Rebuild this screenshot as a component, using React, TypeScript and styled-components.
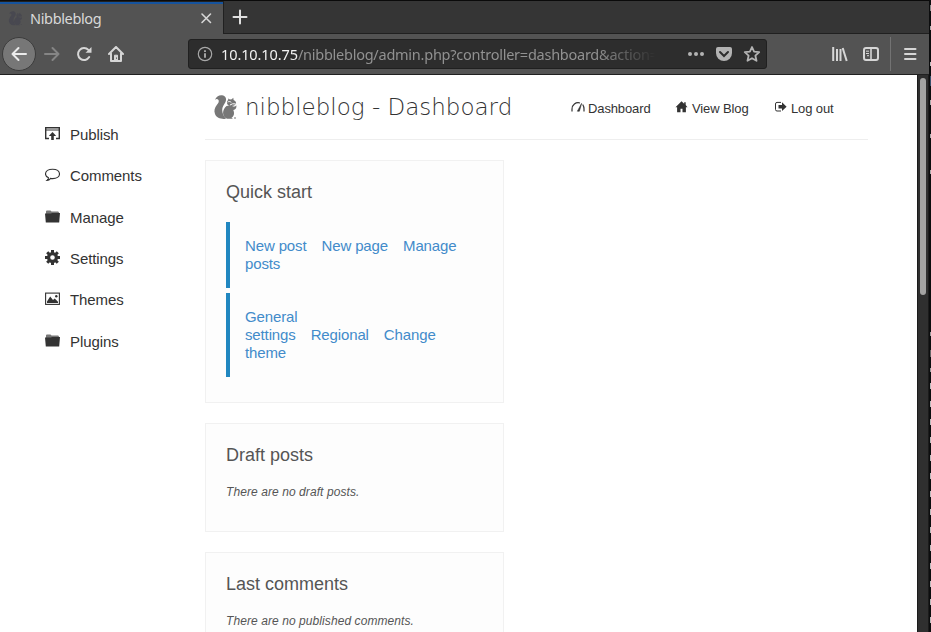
import React from "react";
import styled, { createGlobalStyle } from "styled-components";

const Global = createGlobalStyle`
  * { box-sizing: border-box; }
  body { margin: 0; background: #0c0d0e; overflow: hidden; }
  h1, h2, p { margin: 0; font-weight: 400; }
  svg { display: block; flex: none; }
`;

const chromeFont = `"Noto Sans", "Open Sans", sans-serif`;
const pageFont = `"Liberation Sans", Arial, sans-serif`;

const Desktop = styled.div`
  display: grid;
  grid-template-columns: 929px 2px;
  width: 931px;
  height: 632px;
  overflow: hidden;
`;

const Browser = styled.div`
  display: grid;
  grid-template-rows: 33px 41px 557px;
  border-top: 1px solid #0a0a0a;
  height: 632px;
  overflow: hidden;
`;

const TabStrip = styled.div`
  display: flex;
  background: #353535;
`;

const Tab = styled.div`
  display: flex;
  align-items: center;
  width: 223px;
  height: 33px;
  padding: 3px 9px 2px 8px;
  background: linear-gradient(#202020 1px, #15539e 1px, #15539e 3px, #535353 3px);
`;

const TabTitle = styled.span`
  flex: 1;
  margin-left: 7px;
  font: 14.5px/20px ${chromeFont};
  letter-spacing: -0.35px;
  color: #d9d9d9;
`;

const StripRest = styled.div`
  flex: 1;
  height: 33px;
  padding: 8px 0 0 8px;
  border-left: 1px solid #202020;
  border-bottom: 1px solid #202020;
`;

const Toolbar = styled.div`
  display: flex;
  align-items: center;
  background: #535353;
  border-bottom: 1px solid #202020;
  padding: 0 11px 1px 2px;
`;

const BackButton = styled.div`
  display: grid;
  place-items: center;
  width: 34px;
  height: 34px;
  flex: none;
  border-radius: 50%;
  background: #777;
  border: 1px solid #3c3c3c;
`;

const NavIcons = styled.div`
  display: flex;
  gap: 16px;
  width: 152px;
  padding-left: 8px;
  flex: none;
`;

const AddressBar = styled.div`
  display: flex;
  align-items: center;
  width: 579px;
  height: 30px;
  flex: none;
  padding: 0 5px 0 8px;
  background: #2d2d2d;
  border: 1px solid #202020;
  border-radius: 3px;
`;

const Url = styled.div`
  width: 436px;
  margin-left: 8px;
  white-space: nowrap;
  font: 14.5px/22px ${chromeFont};
  letter-spacing: -0.25px;
  color: #919191;
  mask-image: linear-gradient(to right, #000 375px, transparent 435px);
`;

const Host = styled.span`
  color: #f2f2f2;
  letter-spacing: -0.1px;
`;

const BarActions = styled.div`
  display: flex;
  gap: 10px;
  margin-left: auto;
`;

const Tools = styled.div`
  display: flex;
  align-items: center;
  margin-left: auto;
`;

const ToolGroup = styled.div`
  display: flex;
  gap: 15px;
`;

const Divider = styled.div`
  width: 1px;
  height: 34px;
  margin: 0 11px;
  background: #737373;
`;

const Viewport = styled.div`
  display: grid;
  grid-template-columns: 917px 12px;
  height: 557px;
`;

const Page = styled.div`
  display: grid;
  grid-template-columns: 205px 663px;
  height: 557px;
  overflow: hidden;
  background: #fff;
  font-family: ${pageFont};
`;

const ScrollTrack = styled.div`
  background: #2f2f2f;
  border-left: 1px solid #1b1b1b;
  border-right: 1px solid #1b1b1b;
  padding: 3px 2px 0 2px;
`;

const ScrollThumb = styled.div`
  width: 6px;
  height: 217px;
  border-radius: 3px;
  background: #a3a3a2;
`;

const Sidebar = styled.nav`
  padding: 38.7px 0 0 45px;
`;

const SideLink = styled.a`
  display: flex;
  align-items: center;
  gap: 10px;
  height: 41.4px;
  font-size: 15px;
  letter-spacing: -0.09px;
  color: #333;
  svg { margin-top: -2px; }
`;

const Main = styled.main`
  display: flex;
  flex-direction: column;
  gap: 20px;
`;

const Header = styled.header`
  display: flex;
  height: 65px;
  flex: none;
  border-bottom: 1px solid #eee;
  padding: 18px 0 0 8px;
`;

const Logo = styled.div`
  padding-top: 2px;
`;

const Title = styled.h1`
  width: 326px;
  margin-left: 7px;
  white-space: nowrap;
  font: 200 23px/29px "DejaVu Sans", sans-serif;
  letter-spacing: 0;
  color: #333;
`;

const TopLink = styled.a<{ $width: number }>`
  display: flex;
  gap: 3px;
  height: 18px;
  margin-top: 7px;
  width: ${(p) => p.$width}px;
  font-size: 13px;
  letter-spacing: -0.12px;
  line-height: 17px;
  white-space: nowrap;
  color: #333;
`;

const Card = styled.section<{ $height: number }>`
  width: 299px;
  height: ${(p) => p.$height}px;
  flex: none;
  padding: 20px;
  background: #fdfdfd;
  border: 1px solid #f1f1f1;
`;

const CardTitle = styled.h2`
  font-size: 18px;
  line-height: 22px;
  margin-bottom: 19px;
  color: #555;
`;

const QuickGroup = styled.div`
  margin-bottom: 5px;
  padding: 15px;
  border-left: 4px solid #2187c0;
  font-size: 15px;
  letter-spacing: -0.13px;
  line-height: 18px;
  white-space: nowrap;
`;

const QuickLink = styled.a`
  margin-right: 15px;
  color: #428bca;
`;

const Empty = styled.p`
  font-size: 12px;
  letter-spacing: 0.08px;
  line-height: 15px;
  font-style: italic;
  color: #555;
`;

const Terminal = styled.div`
  padding-left: 1px;
  background: #0c0d0e;
`;

const Specks = styled.div`
  height: 632px;
  background:
    linear-gradient(#8a8a8a, #8a8a8a) 0 5px / 1px 6px no-repeat,
    linear-gradient(#aaa, #aaa) 0 26px / 1px 4px no-repeat,
    linear-gradient(#bbb, #bbb) 0 62px / 1px 4px no-repeat,
    linear-gradient(#38516b, #38516b) 0 76px / 1px 10px no-repeat,
    linear-gradient(#aaa, #aaa) 0 100px / 1px 5px no-repeat,
    linear-gradient(#aaa, #aaa) 0 134px / 1px 4px no-repeat,
    linear-gradient(#aaa, #aaa) 0 170px / 1px 4px no-repeat,
    linear-gradient(#999, #999) 0 332px / 1px 4px no-repeat,
    linear-gradient(#666, #666) 0 350px / 1px 7px no-repeat,
    linear-gradient(#999, #999) 0 368px / 1px 4px no-repeat,
    repeating-linear-gradient(#bbb 0 6px, transparent 6px 18px) 0 383px / 1px 249px no-repeat;
`;

const Squirrel = ({ size, color, eye }: { size: number; color: string; eye: string }) => (
  <svg width={size} height={size} viewBox="0 0 24 25" fill={color}>
    <path d="M1.5 5C2.5 1.5 5.5 0 8.500.3c3.500.4 5 3.500 3.500 6.700-1.500 2.800-3.500 5-3.300 8 .1 3 1.300 6.500 3.800 8.700C8 24.500 3 23 1.500 19c-1.300-3.500-.2-6.500 1.800-9C5 8 6 6 4.800 4.700 3.700 3.700 2.500 4 1.500 5Z" />
    <path d="M13 11c1.700-.6 3.700-.7 5.500-.3 1.500 1.500 3.500 1 4.300-.5.7 2.500-.8 4.300-3 4.700 1.500 3.500.6 6.300-1.800 7.800l1.500 1h-6c-5.300-1.700-5-9.200-.5-12.700Z" />
    <path d="M14.500 3.500l2 .9 1.700-.2 1.600-1.400.3 2.200c1.800.7 2.600 2 2.500 3.500-1 1.800-2.800 2.600-5 2.500-2 .4-3.500-.5-4-2.400-.3-2 .2-3.200 1.200-3.600Z" />
    <path d="M14.200 7.200c1-1 2.500-.8 3.600.2M16.500 10l2.500-1.200 3.200.1" stroke={eye} strokeWidth="1" fill="none" />
    <path d="M20.500 22.500h2v1h-2z" />
  </svg>
);

const Line = ({ d, color = "#d6d6d6", w = 2 }: { d: string; color?: string; w?: number }) => (
  <svg width="16" height="16" viewBox="0 0 16 16" fill="none" stroke={color} strokeWidth={w} strokeLinecap="round" strokeLinejoin="round">
    <path d={d} />
  </svg>
);

const Reload = () => (
  <svg width="16" height="16" viewBox="0 0 16 16">
    <path d="M13.2 11.1A6 6 0 1 1 12.4 3.9" fill="none" stroke="#d6d6d6" strokeWidth="2" strokeLinecap="round" />
    <path d="M15.5 1v5.8H9.5z" fill="#d6d6d6" />
  </svg>
);

const Home = () => (
  <svg width="16" height="16" viewBox="0 0 16 16" fill="none" stroke="#d6d6d6" strokeWidth="2" strokeLinejoin="round">
    <path d="M1 8l7-7 7 7M3 7.5V15h10V7.5" strokeLinecap="round" />
    <path d="M6.5 15V9.2h3V15z" fill="#d6d6d6" strokeWidth="1" />
    <path d="M8.5 11.5v1.3" stroke="#535353" strokeWidth="1" />
  </svg>
);

const Info = () => (
  <svg width="16" height="16" viewBox="0 0 16 16" fill="none" stroke="#a8a8a8">
    <circle cx="8" cy="8" r="6.7" strokeWidth="1.2" />
    <path d="M8 7.2v4.5M8 4.2v1.8" strokeWidth="1.9" />
  </svg>
);

const Dots = () => (
  <svg width="18" height="16" viewBox="0 0 18 16" fill="#b3b3b3">
    <circle cx="3" cy="8" r="2" />
    <circle cx="9" cy="8" r="2" />
    <circle cx="15" cy="8" r="2" />
  </svg>
);

const Pocket = () => (
  <svg width="18" height="16" viewBox="0 0 18 16">
    <path d="M3 1h12q2 0 2 2v4a8 8 0 0 1-16 0V3q0-2 2-2Z" fill="#b3b3b3" />
    <path d="M5 6l4 4 4-4" fill="none" stroke="#2d2d2d" strokeWidth="2" strokeLinecap="round" />
  </svg>
);

const Star = () => (
  <svg width="18" height="16" viewBox="0 0 18 16">
    <path d="M9 1l2.1 4.7 5.1.5-3.8 3.5 1.1 5.1L9 12.2l-4.5 2.6 1.1-5.1-3.8-3.5 5.1-.5Z" fill="none" stroke="#b3b3b3" strokeWidth="1.8" strokeLinejoin="round" />
  </svg>
);

const Library = () => (
  <svg width="16" height="16" viewBox="0 0 16 16" fill="none" stroke="#d6d6d6" strokeWidth="2">
    <path d="M1.2 1v14M5 3v12M8.5 3v12" />
    <path d="M10.7 2l4 13" />
  </svg>
);

const SidebarIcon = () => (
  <svg width="16" height="16" viewBox="0 0 16 16" fill="none" stroke="#d6d6d6">
    <rect x="1" y="2" width="14" height="12" rx="2" strokeWidth="2" />
    <path d="M8 2v12" strokeWidth="1.6" />
    <path d="M3 5.2h3M3 7.5h3M4 9.7h2" strokeWidth="1" />
  </svg>
);

const Publish = () => (
  <svg width="15" height="15" viewBox="0 0 15 15" fill="none" stroke="#333" strokeWidth="1.4">
    <path d="M4 12.5H.7V1.7h13.6v10.8H11" />
    <path d="M1 4h13" strokeWidth="1" />
    <path d="M7.5 14V9" strokeWidth="2.6" />
    <path d="M7.5 6L11.2 10H3.8z" fill="#333" stroke="none" />
  </svg>
);

const Comment = () => (
  <svg width="15" height="15" viewBox="0 0 15 15" fill="none" stroke="#333" strokeWidth="1.1">
    <path d="M3.5 10.8C1.5 9.8.5 8.6.5 7 .5 4.2 3.5 2.2 7.6 2.2S14.5 4.2 14.5 7s-3 4.6-6.9 4.6c-.8 0-1.3 0-2-.2C4.7 12.7 3.3 13.5 2 13.5c1-.8 1.5-1.7 1.5-2.7Z" />
  </svg>
);

const Folder = () => (
  <svg width="15" height="15" viewBox="0 0 15 15">
    <path d="M1 2.5Q1 1.500 2 1.500h3.500l1 1H13q1 0 1 1.500v1H1z" fill="#777" />
    <path d="M0 4.500h6l1-.5h8L14.200 13.500H.8z" fill="#333" />
  </svg>
);

const Gear = () => (
  <svg width="15" height="15" viewBox="0 0 15 15" fill="none" stroke="#333">
    <circle cx="7.5" cy="7.5" r="3.9" strokeWidth="3.2" />
    <path d="M7.5 0v3M7.5 12v3M0 7.5h3M12 7.5h3M2.2 2.2l2 2M10.8 10.8l2 2M2.2 12.8l2-2M10.8 4.2l2-2" strokeWidth="3" />
  </svg>
);

const Picture = () => (
  <svg width="15" height="15" viewBox="0 0 15 15">
    <rect x=".6" y="2.1" width="13.8" height="11.3" fill="none" stroke="#333" strokeWidth="1.1" />
    <path d="M2 12V10.5L5.2 5.5 8 9l1.7-1.5L13 10.8V12z" fill="#333" />
    <circle cx="11.3" cy="5.3" r="1.2" fill="#333" />
  </svg>
);

const Gauge = () => (
  <svg width="14" height="14" viewBox="0 0 14 14" fill="none" stroke="#333" strokeWidth="1.2">
    <path d="M1 11.5V9.2A6.2 6.2 0 0 1 9 3M11.7 4.5Q13 6.5 13 9v2.5" />
    <path d="M10.6 3.4L6.4 11.2h2z" fill="#333" strokeWidth=".6" />
  </svg>
);

const HouseSolid = () => (
  <svg width="14" height="14" viewBox="0 0 14 14" fill="#333">
    <path d="M6.5 1.2L.5 7.3h1.6v5h3.4V8.8h2v3.5h3.4v-5h1.6L10.7 5V2.3H9.2v1.4z" />
  </svg>
);

const Exit = () => (
  <svg width="14" height="14" viewBox="0 0 14 14">
    <path d="M7 2.4H3Q1.5 2.4 1.5 4v5.5q0 1.5 1.5 1.5h4" fill="none" stroke="#333" strokeWidth="1" />
    <path d="M4.5 5H8V2.3l4.6 4.4L8 11V8.5H4.5z" fill="#333" />
  </svg>
);

const sections = [
  { label: "Publish", icon: <Publish /> },
  { label: "Comments", icon: <Comment /> },
  { label: "Manage", icon: <Folder /> },
  { label: "Settings", icon: <Gear /> },
  { label: "Themes", icon: <Picture /> },
  { label: "Plugins", icon: <Folder /> },
];

export default function App() {
  return (
    <Desktop>
      <Global />
      <Browser>
        <TabStrip>
          <Tab>
            <Squirrel size={15} color="#484850" eye="#535353" />
            <TabTitle>Nibbleblog</TabTitle>
            <Line d="M4 4l8.5 8.5M12.5 4L4 12.5" w={1.6} />
          </Tab>
          <StripRest>
            <Line d="M8 1.5v13M1.5 8h13" color="#e0e0e0" />
          </StripRest>
        </TabStrip>
        <Toolbar>
          <BackButton>
            <Line d="M15 8H1.5M7.5 2L1.5 8l6 6" color="#ececec" />
          </BackButton>
          <NavIcons>
            <Line d="M1 8h13.5M8.5 2l6 6-6 6" color="#858585" />
            <Reload />
            <Home />
          </NavIcons>
          <AddressBar>
            <Info />
            <Url>
              <Host>10.10.10.75</Host>/nibbleblog/admin.php?controller=dashboard&amp;action=
            </Url>
            <BarActions>
              <Dots />
              <Pocket />
              <Star />
            </BarActions>
          </AddressBar>
          <Tools>
            <ToolGroup>
              <Library />
              <SidebarIcon />
            </ToolGroup>
            <Divider />
            <Line d="M3 3h10.5M3 8h10.5M3 13h10.5" />
          </Tools>
        </Toolbar>
        <Viewport>
          <Page>
            <Sidebar>
              {sections.map((s) => (
                <SideLink key={s.label}>
                  {s.icon}
                  {s.label}
                </SideLink>
              ))}
            </Sidebar>
            <Main>
              <Header>
                <Logo>
                  <Squirrel size={25} color="#777" eye="#fff" />
                </Logo>
                <Title>nibbleblog - Dashboard</Title>
                <TopLink $width={104}><Gauge />Dashboard</TopLink>
                <TopLink $width={99}><HouseSolid />View Blog</TopLink>
                <TopLink $width={80}><Exit />Log out</TopLink>
              </Header>
              <Card $height={243}>
                <CardTitle>Quick start</CardTitle>
                <QuickGroup>
                  <QuickLink>New post</QuickLink>
                  <QuickLink>New page</QuickLink>
                  <QuickLink>Manage<br />posts</QuickLink>
                </QuickGroup>
                <QuickGroup>
                  <QuickLink>General<br />settings</QuickLink>
                  <QuickLink>Regional</QuickLink>
                  <QuickLink>Change<br />theme</QuickLink>
                </QuickGroup>
              </Card>
              <Card $height={109}>
                <CardTitle>Draft posts</CardTitle>
                <Empty>There are no draft posts.</Empty>
              </Card>
              <Card $height={109}>
                <CardTitle>Last comments</CardTitle>
                <Empty>There are no published comments.</Empty>
              </Card>
            </Main>
          </Page>
          <ScrollTrack>
            <ScrollThumb />
          </ScrollTrack>
        </Viewport>
      </Browser>
      <Terminal>
        <Specks />
      </Terminal>
    </Desktop>
  );
}
